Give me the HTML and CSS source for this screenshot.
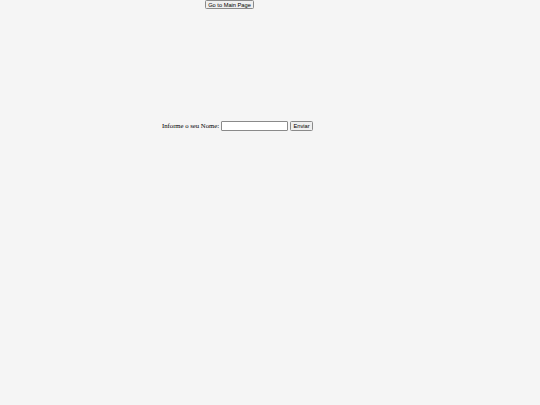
FILE: index.html
```html
<!DOCTYPE html>
<html>
<head>
<meta charset="utf-8">
<link rel="stylesheet" href="styles.css">
</head>
<body>
<div class="top">
  <button class="btn main-btn">Go to Main Page</button>
</div>
<form class="form-row">
  <label class="lbl" for="nome">Informe o seu Nome:</label>
  <input class="field" id="nome" type="text">
  <button class="btn send-btn" type="button">Enviar</button>
</form>
</body>
</html>
```
FILE: styles.css
```css
html, body {
  margin: 0;
  padding: 0;
  background: #f5f5f5;
  width: 540px;
  height: 405px;
  overflow: hidden;
}
.top {
  display: flex;
  padding-left: 205px;
  height: 9px;
}
.btn {
  font-family: "Liberation Sans", Arial, sans-serif;
  font-size: 5.7px;
  line-height: 6px;
  white-space: nowrap;
  color: #000;
  background: #efefef;
  border: 1px solid #8a8a8a;
  border-radius: 1.5px;
  padding: 0;
  margin: 0;
  box-sizing: border-box;
}
.main-btn {
  width: 49px;
  height: 9px;
}
.form-row {
  display: flex;
  align-items: center;
  margin: 112px 0 0 0;
  padding-left: 162px;
  height: 10px;
}
.lbl {
  font-family: "Liberation Serif", "Times New Roman", serif;
  font-size: 6.7px;
  line-height: 10px;
  white-space: nowrap;
  color: #000;
  margin-right: 2px;
}
.field {
  width: 67px;
  height: 10px;
  box-sizing: border-box;
  border: 1px solid #8a8a8a;
  border-radius: 1px;
  background: #fff;
  padding: 0;
  margin: 0 2px 0 0;
}
.send-btn {
  width: 23px;
  height: 10px;
}
```
